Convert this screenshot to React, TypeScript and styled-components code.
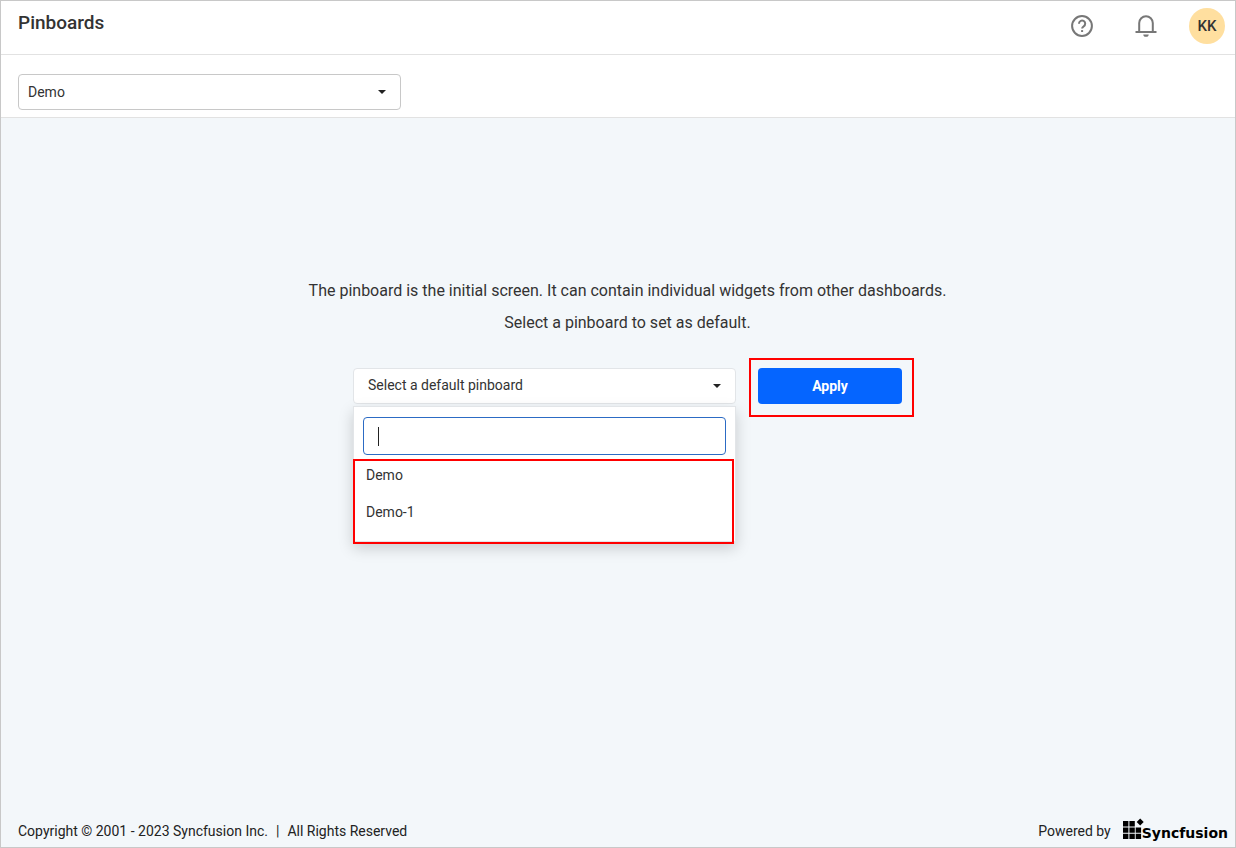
import React from "react";
import styled, { createGlobalStyle } from "styled-components";

const GlobalStyle = createGlobalStyle`
  *, *::before, *::after { box-sizing: border-box; }
  body { margin: 0; }
  body, button, input, select {
    font-family: Roboto, "Liberation Sans", sans-serif;
    font-size: 14px;
    color: #333;
  }
`;

const Page = styled.div`
  display: flex;
  flex-direction: column;
  min-height: 100vh;
  border: 1px solid #c8c8c8;
  background: #f3f7fa;
`;

const Header = styled.header`
  display: flex;
  align-items: flex-start;
  justify-content: space-between;
  height: 54px;
  padding: 7px 10px 0 17px;
  background: #fff;
  border-bottom: 1px solid #e2e2e2;
`;

const Title = styled.h1`
  margin: 0;
  font-size: 19px;
  line-height: 30px;
  font-weight: 500;
`;

const Actions = styled.div`
  display: flex;
  align-items: center;
`;

const IconButton = styled.button`
  display: flex;
  margin: 0 40px 0 0;
  padding: 0;
  border: 0;
  background: none;
  color: #777;
`;

const Avatar = styled.button`
  width: 36px;
  height: 36px;
  margin-left: -9px;
  padding: 0;
  border: 0;
  border-radius: 50%;
  background: #ffdf9f;
  font-size: 15px;
  font-weight: 500;
`;

const Toolbar = styled.div`
  padding: 19px 17px 7px;
  background: #fff;
  border-bottom: 1px solid #e2e2e2;
`;

const SelectBox = styled.div`
  position: relative;
  width: 383px;
  max-width: 100%;
`;

const Select = styled.select<{ $soft?: boolean }>`
  display: block;
  width: 100%;
  height: 36px;
  padding: 0 32px ${(p) => (p.$soft ? 2 : 0)}px ${(p) => (p.$soft ? 14 : 9)}px;
  appearance: none;
  border: 1px solid ${(p) => (p.$soft ? "#e2e5e8" : "#c8c8c8")};
  border-radius: 4px;
  background: #fff;
`;

const Arrow = styled.svg`
  position: absolute;
  top: 16px;
  right: 15px;
  pointer-events: none;
`;

const Main = styled.main`
  flex: 1;
  display: flex;
  flex-direction: column;
  align-items: center;
  padding: 157px 0 0 19px;
`;

const Message = styled.p`
  margin: 0;
  font-size: 16px;
  line-height: 32px;
  text-align: center;
`;

const Chooser = styled.div`
  display: flex;
  gap: 22px;
  margin-top: 29px;
`;

const Panel = styled.div`
  position: absolute;
  top: 38px;
  left: 0;
  width: 100%;
  padding: 10px 9px 0;
  border: 1px solid #e2e5e8;
  background: #fff;
  box-shadow: 0 6px 14px rgba(0, 0, 0, 0.18);
`;

const SearchBox = styled.div`
  position: relative;
`;

const Search = styled.input`
  display: block;
  width: 100%;
  height: 38px;
  padding: 0 14px;
  border: 1px solid #2c6bc4;
  border-radius: 4px;
  outline: 0;
  background: #fff;
`;

const Caret = styled.span`
  position: absolute;
  top: 10px;
  left: 15px;
  width: 1px;
  height: 19px;
  background: #222;
`;

const Options = styled.ul`
  position: relative;
  margin: 4px -9px 0;
  padding: 0 0 8px;
  list-style: none;

  &::after {
    content: "";
    position: absolute;
    inset: 0 1px -3px -1px;
    border: 2px solid #f00;
    pointer-events: none;
  }
`;

const Option = styled.button`
  display: block;
  width: 100%;
  height: 37px;
  padding: 0 12px 6px;
  border: 0;
  background: none;
  text-align: left;
`;

const ApplyArea = styled.div`
  position: relative;

  &::after {
    content: "";
    position: absolute;
    inset: -10px -12px -13px -9px;
    border: 2px solid #f00;
    pointer-events: none;
  }
`;

const ApplyButton = styled.button`
  width: 144px;
  height: 36px;
  border: 0;
  border-radius: 4px;
  background: #0565ff;
  color: #fff;
  font-weight: 700;
`;

const Footer = styled.footer`
  display: flex;
  align-items: center;
  justify-content: space-between;
  height: 32px;
  padding: 0 7px 0 17px;
  color: #222;
`;

const Legal = styled.div`
  display: flex;
  gap: 8px;
`;

const Powered = styled.div`
  display: flex;
  align-items: center;
  gap: 12px;
`;

const Logo = styled.a`
  display: flex;
  align-items: flex-end;
  color: #000;
  text-decoration: none;
  font: 700 14px/20px "DejaVu Sans", sans-serif;
`;

const Mark = styled.svg`
  margin-bottom: 4px;
  overflow: visible;
`;

const DownArrow = () => (
  <Arrow width="8" height="4" viewBox="0 0 8 4" aria-hidden="true">
    <path d="M0 0h8L4 4z" fill="#222" />
  </Arrow>
);

const HelpIcon = () => (
  <svg width="24" height="24" viewBox="0 0 24 24" fill="none" stroke="currentColor" strokeWidth="2" aria-hidden="true">
    <circle cx="12" cy="12" r="9.9" />
    <path d="M9 9.7a3.1 3.1 0 1 1 4.7 2.6c-1.1.7-1.6 1.1-1.6 2.1" />
    <path d="M12.1 16.1v1.9" />
  </svg>
);

const BellIcon = () => (
  <svg width="24" height="24" viewBox="0 0 24 24" fill="none" stroke="currentColor" strokeWidth="2" aria-hidden="true">
    <path d="M1.500 18H22.500" />
    <path d="M5.200 18V9a6.800 6.800 0 0 1 13.600 0v9" />
    <path d="M9.300 20.500h5.400a2.700 2.300 0 0 1-5.400 0z" fill="currentColor" stroke="none" />
  </svg>
);

const LogoMark = () => (
  <Mark width="19" height="20" viewBox="0 2 19 20" fill="#000" aria-hidden="true">
    <path d="M0 4h5.400v5.400H0zM6.400 4h5.400v5.400H6.400zM0 10.400h5.400v5.400H0zM6.400 10.400h5.400v5.400H6.400zM12.700 10.400h5.400v5.400h-5.400zM0 16.700h5.400v5.400H0zM6.400 16.700h5.400v5.400H6.400zM12.700 16.700h5.400v5.400h-5.400z" />
    <path d="M17.200 1.500l3.500 3.500L17.200 8.500l-3.500-3.500z" />
  </Mark>
);

export default function App() {
  return (
    <Page>
      <GlobalStyle />
      <Header>
        <Title>Pinboards</Title>
        <Actions>
          <IconButton aria-label="Help"><HelpIcon /></IconButton>
          <IconButton aria-label="Notifications"><BellIcon /></IconButton>
          <Avatar aria-label="Account KK">KK</Avatar>
        </Actions>
      </Header>
      <Toolbar>
        <SelectBox>
          <Select aria-label="Pinboard" defaultValue="Demo">
            <option>Demo</option>
            <option>Demo-1</option>
          </Select>
          <DownArrow />
        </SelectBox>
      </Toolbar>
      <Main>
        <Message>The pinboard is the initial screen. It can contain individual widgets from other dashboards.</Message>
        <Message>Select a pinboard to set as default.</Message>
        <Chooser>
          <SelectBox>
            <Select $soft aria-label="Default pinboard">
              <option>Select a default pinboard</option>
            </Select>
            <DownArrow />
            <Panel>
              <SearchBox>
                <Search type="text" aria-label="Search pinboards" />
                <Caret />
              </SearchBox>
              <Options>
                <li><Option>Demo</Option></li>
                <li><Option>Demo-1</Option></li>
              </Options>
            </Panel>
          </SelectBox>
          <ApplyArea>
            <ApplyButton>Apply</ApplyButton>
          </ApplyArea>
        </Chooser>
      </Main>
      <Footer>
        <Legal>
          <span>Copyright © 2001 - 2023 Syncfusion Inc.</span>
          <span>|</span>
          <span>All Rights Reserved</span>
        </Legal>
        <Powered>
          <span>Powered by</span>
          <Logo href="#"><LogoMark />Syncfusion</Logo>
        </Powered>
      </Footer>
    </Page>
  );
}
